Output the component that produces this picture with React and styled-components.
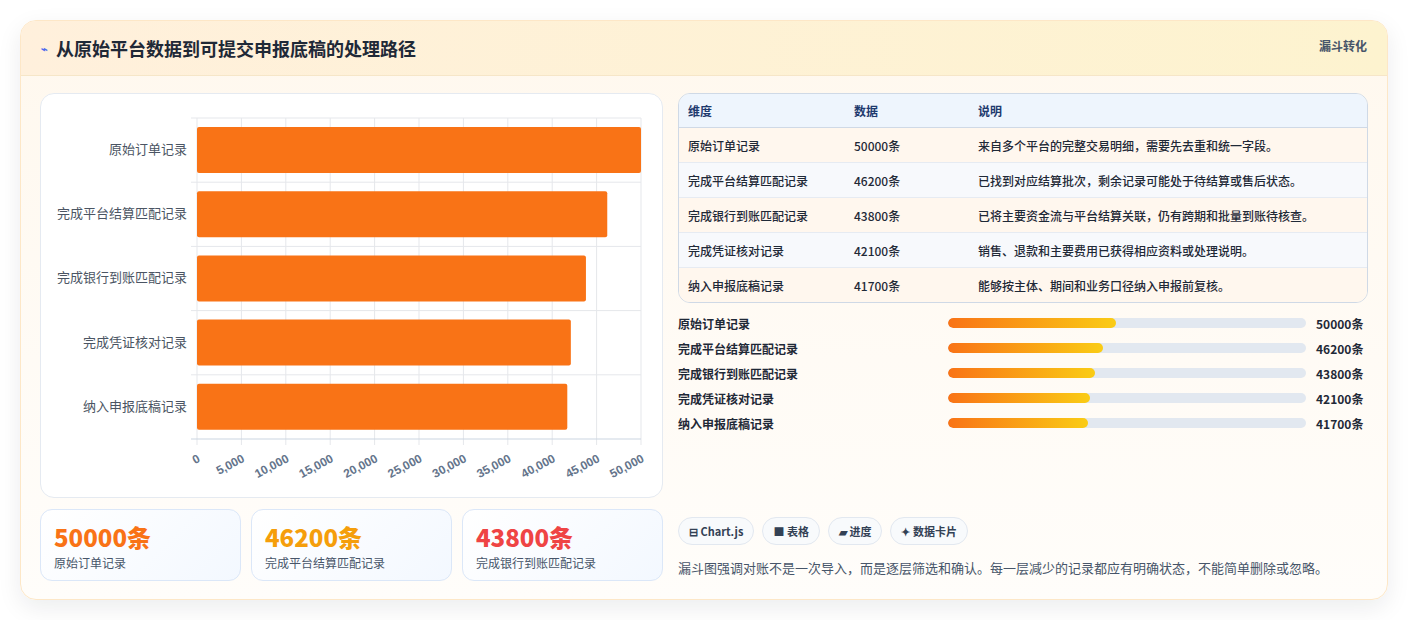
import React from "react";
import styled, { createGlobalStyle } from "styled-components";

const rows = [
  { name: "原始订单记录", value: 50000, note: "来自多个平台的完整交易明细，需要先去重和统一字段。" },
  { name: "完成平台结算匹配记录", value: 46200, note: "已找到对应结算批次，剩余记录可能处于待结算或售后状态。" },
  { name: "完成银行到账匹配记录", value: 43800, note: "已将主要资金流与平台结算关联，仍有跨期和批量到账待核查。" },
  { name: "完成凭证核对记录", value: 42100, note: "销售、退款和主要费用已获得相应资料或处理说明。" },
  { name: "纳入申报底稿记录", value: 41700, note: "能够按主体、期间和业务口径纳入申报前复核。" },
];

const statColors = ["#f97316", "#f59e0b", "#ef4444"];

const Global = createGlobalStyle`
  body {
    margin: 0;
    background: #fff;
    font-family: "Noto Sans CJK SC", "Noto Sans", sans-serif;
  }
`;

const Page = styled.div`
  padding: 20px;
  width: 1368px;
`;

const Card = styled.div`
  border: 1px solid #fde7c7;
  border-radius: 16px;
  overflow: hidden;
  box-shadow: 0 8px 24px rgba(15, 23, 42, 0.08);
  background: linear-gradient(180deg, #fff8ee 0%, #fffdfa 100%);
`;

const Header = styled.div`
  height: 54px;
  display: flex;
  justify-content: space-between;
  padding: 0 20px;
  background: linear-gradient(90deg, #fff0dc 0%, #fdf3cf 100%);
  border-bottom: 1px solid #f6e6c8;
`;

const Title = styled.h1`
  margin: 0;
  align-self: center;
  display: flex;
  align-items: center;
  gap: 8px;
  font-size: 18px;
  font-weight: 700;
  color: #1f2937;
`;

const Bolt = styled.span`
  color: #4f6bed;
  font-size: 11px;
`;

const Badge = styled.span`
  margin-top: 16px;
  font-size: 12px;
  font-weight: 700;
  color: #475569;
`;

const Body = styled.div`
  display: grid;
  grid-template-columns: 623px 1fr;
  gap: 15px;
  padding: 17px 19px 18px 19px;
`;

const Column = styled.div`
  display: flex;
  flex-direction: column;
  gap: 11px;
`;

const ChartBox = styled.div`
  height: 403px;
  background: #fff;
  border: 1px solid #e5eaf1;
  border-radius: 14px;
`;

const Stats = styled.div`
  display: grid;
  grid-template-columns: repeat(3, 1fr);
  gap: 10px;
`;

const Stat = styled.div`
  height: 72px;
  box-sizing: border-box;
  padding: 12px 13px;
  border: 1px solid #dbe7f8;
  border-radius: 12px;
  background: linear-gradient(135deg, #ffffff 0%, #f3f8ff 100%);
`;

const StatNum = styled.div`
  font-size: 24px;
  font-weight: 800;
  line-height: 30px;
  color: ${(p) => p.$color};
`;

const StatLabel = styled.div`
  font-size: 12px;
  color: #475569;
  margin-top: 2px;
`;

const Table = styled.table`
  width: 100%;
  border-collapse: separate;
  border-spacing: 0;
  border: 1px solid #cfd9e6;
  border-radius: 12px;
  overflow: hidden;
  font-size: 12px;
  th {
    text-align: left;
    height: 33px;
    padding: 0 9px;
    background: #eef5fd;
    color: #1e3a6e;
    font-weight: 700;
    border-bottom: 1px solid #cfd9e6;
  }
  td {
    height: 34px;
    padding: 0 9px;
    color: #1f2937;
    font-weight: 500;
    border-top: 1px solid #e6ebf2;
  }
  tbody tr:first-child td { border-top: none; }
  tbody tr:nth-child(odd) td { background: #fff7ee; }
  tbody tr:nth-child(even) td { background: #f7f9fc; }
`;

const Progress = styled.div`
  display: flex;
  flex-direction: column;
  gap: 7px;
  margin-top: 0px;
`;

const PRow = styled.div`
  display: grid;
  grid-template-columns: 260px 358px 1fr;
  align-items: center;
  column-gap: 10px;
  font-size: 12px;
  height: 18px;
`;

const PLabel = styled.span`
  color: #1f2937;
  font-weight: 600;
`;

const Track = styled.div`
  height: 10px;
  border-radius: 5px;
  background: #e2e8f0;
  overflow: hidden;
`;

const Fill = styled.div`
  height: 100%;
  border-radius: 5px;
  background: linear-gradient(90deg, #f97316, #facc15);
`;

const PValue = styled.span`
  color: #1f2937;
  font-weight: 700;
`;

const Tags = styled.div`
  display: flex;
  gap: 8px;
  margin-top: auto;
`;

const Tag = styled.span`
  height: 26px;
  padding: 0 10px;
  display: inline-flex;
  align-items: center;
  gap: 4px;
  border: 1px solid #e2e8f0;
  border-radius: 14px;
  background: #f8fafc;
  font-size: 11px;
  font-weight: 700;
  color: #334155;
`;

const Note = styled.p`
  margin: 2px 0 4px;
  font-size: 13px;
  color: #475569;
`;

const ticks = [0, 5000, 10000, 15000, 20000, 25000, 30000, 35000, 40000, 45000, 50000];

function FunnelChart() {
  const L = 156, R = 600, T = 24, B = 345;
  const rowH = (B - T) / rows.length;
  const x = (v) => L + ((R - L) * v) / 50000;
  return (
    <svg width="623" height="403">
      {ticks.map((t) => (
        <line key={t} x1={x(t)} x2={x(t)} y1={T} y2={B + 6} stroke="#e5e7eb" />
      ))}
      {rows.map((r, i) => (
        <line key={i} x1={L - 6} x2={R} y1={T + rowH * i} y2={T + rowH * i} stroke="#e5e7eb" />
      ))}
      <line x1={L - 6} x2={R} y1={B} y2={B} stroke="#cbd5e1" />
      {rows.map((r, i) => (
        <g key={r.name}>
          <rect x={L} y={T + rowH * i + 9} width={x(r.value) - L} height={46} rx="2" fill="#f97316" />
          <text x={L - 10} y={T + rowH * i + 36} textAnchor="end" fontSize="13" fill="#4b5563" fontFamily="Noto Sans CJK SC, sans-serif">
            {r.name}
          </text>
        </g>
      ))}
      {ticks.map((t) => (
        <text
          key={t}
          x={x(t) + 4}
          y={B + 22}
          textAnchor="end"
          fontSize="12"
          fontWeight="700"
          fill="#64748b"
          fontFamily="Liberation Sans, sans-serif"
          transform={`rotate(-28 ${x(t) + 4} ${B + 22})`}
        >
          {t.toLocaleString("en-US")}
        </text>
      ))}
    </svg>
  );
}

export default function App() {
  return (
    <Page>
      <Global />
      <Card>
        <Header>
          <Title>
            <Bolt>⌁</Bolt>从原始平台数据到可提交申报底稿的处理路径
          </Title>
          <Badge>漏斗转化</Badge>
        </Header>
        <Body>
          <Column>
            <ChartBox>
              <FunnelChart />
            </ChartBox>
            <Stats>
              {rows.slice(0, 3).map((r, i) => (
                <Stat key={r.name}>
                  <StatNum $color={statColors[i]}>{r.value}条</StatNum>
                  <StatLabel>{r.name}</StatLabel>
                </Stat>
              ))}
            </Stats>
          </Column>
          <Column>
            <Table>
              <colgroup>
                <col style={{ width: 166 }} />
                <col style={{ width: 124 }} />
                <col />
              </colgroup>
              <thead>
                <tr>
                  <th>维度</th>
                  <th>数据</th>
                  <th>说明</th>
                </tr>
              </thead>
              <tbody>
                {rows.map((r) => (
                  <tr key={r.name}>
                    <td>{r.name}</td>
                    <td>{r.value}条</td>
                    <td>{r.note}</td>
                  </tr>
                ))}
              </tbody>
            </Table>
            <Progress>
              {rows.map((r) => (
                <PRow key={r.name}>
                  <PLabel>{r.name}</PLabel>
                  <Track>
                    <Fill style={{ width: `${(r.value / 106400) * 100}%` }} />
                  </Track>
                  <PValue>{r.value}条</PValue>
                </PRow>
              ))}
            </Progress>
            <Tags>
              <Tag>⊟ Chart.js</Tag>
              <Tag>■ 表格</Tag>
              <Tag>▰ 进度</Tag>
              <Tag>✦ 数据卡片</Tag>
            </Tags>
            <Note>漏斗图强调对账不是一次导入，而是逐层筛选和确认。每一层减少的记录都应有明确状态，不能简单删除或忽略。</Note>
          </Column>
        </Body>
      </Card>
    </Page>
  );
}
